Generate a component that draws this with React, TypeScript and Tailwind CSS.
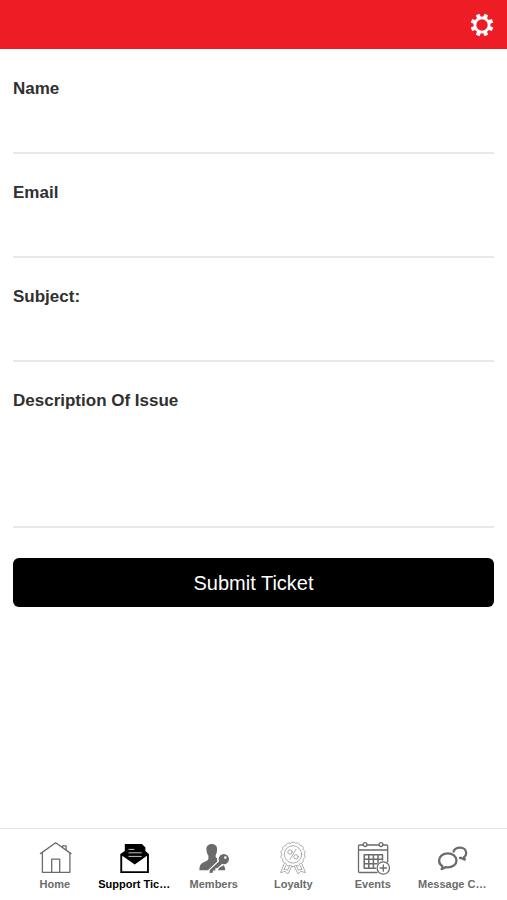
import type { ReactNode } from "react";
import clsx from "clsx";

const toothAngles = [22.5, 67.5, 112.5, 157.5, 202.5, 247.5, 292.5, 337.5];

const GearIcon = () => (
  <svg viewBox="-12 -12 24 24" className="size-6" aria-hidden="true">
    <circle r="7.1" fill="none" stroke="currentColor" strokeWidth="2.8" />
    {toothAngles.map((a) => (
      <path key={a} d="M-2.1 -7.6 L-1.9 -11.4 H1.9 L2.1 -7.6 Z" fill="currentColor" transform={`rotate(${a})`} />
    ))}
  </svg>
);

const NavIcon = ({ children }: { children: ReactNode }) => (
  <svg
    viewBox="0 0 36 36" className="size-9" aria-hidden="true"
    fill="none" stroke="currentColor" strokeWidth="1.3" strokeLinejoin="round" strokeLinecap="round"
  >
    {children}
  </svg>
);

const HomeIcon = () => (
  <NavIcon>
    <path d="M5.4 13V32.3H32.9V13" />
    <path d="M3.4 13.6 18.7 2.7 34 13.6" />
    <path d="M14.7 32V19.2h8V32" />
    <path d="M25.5 7.2V5.8h3.6v4" />
  </NavIcon>
);

const TicketIcon = () => (
  <NavIcon>
    <path d="M8.8 4H26l3.4 3.4V11l3.5 3v19H4.3V14l4.5-3Z" fill="currentColor" stroke="none" />
    <path d="M6.2 15.8V31.2H31V15.8L18.7 24.6Z" fill="#fff" stroke="none" />
    <path d="M12.9 9.4h5M12.9 12.8h12.4M12.9 16.4h12.4" stroke="#c4c4c4" strokeWidth="1" />
  </NavIcon>
);

const MembersIcon = () => (
  <NavIcon>
    <path
      d="M15.8 4c-3.7 0-5.6 2.4-5.4 5.5.1 2.6 1 4.800 2 6.200v3.100c-.5 1.700-2.300 2.600-4.600 3.500-3.200 1.200-4.400 3.600-4.400 7.900h8.800l9.400-8.900v-2.900c-1.200-.5-2.100-1.300-2.100-2.700.9-1.400 1.500-3.700 1.600-6.200.2-3.200-1.800-5.500-5.300-5.500Z"
      fill="currentColor" stroke="none"
    />
    <path d="M25 22.400 14.600 32" stroke="#fff" strokeWidth="6" strokeLinecap="butt" />
    <circle cx="27.600" cy="19.300" r="6.500" fill="#fff" stroke="none" />
    <circle cx="27.800" cy="19.100" r="5.200" fill="currentColor" stroke="none" />
    <circle cx="29.300" cy="17.600" r="1.300" fill="#fff" stroke="none" />
    <path d="m25 19.500-11.200 10.500-.4 2.900 3.300-.2.300-2.100 2.200-.1.200-2.200 2.100-.2 6.200-5.500Z" fill="currentColor" stroke="none" />
    <path d="m21.900 30.300 1.300-2.500 4.400-2.500c1.200 1.100 1.500 2.900 1.500 5Z" fill="currentColor" stroke="none" />
  </NavIcon>
);

// Scalloped outline of the rosette
const lobes = 14;
const polar = (r: number, step: number) => {
  const a = (step * 2 * Math.PI) / lobes;
  return `${(18 + r * Math.sin(a)).toFixed(2)} ${(14.4 - r * Math.cos(a)).toFixed(2)}`;
};
const rosette = `M${polar(11.3, -0.5)}${Array.from({ length: lobes }, (_, i) => `Q${polar(14, i)} ${polar(11.3, i + 0.5)}`).join("")}Z`;

const LoyaltyIcon = () => (
  <NavIcon>
    <g strokeWidth="0.9">
      <path d={rosette} />
      <circle cx="18" cy="14.4" r="8.7" />
      <path d="M9 24 5.600 32.600l4.500-1.200 2.900 2.400 3.800-7.600M27 24l3.400 8.600-4.500-1.200-2.900 2.400-3.800-7.600" />
      <path d="m10.800 25.500-1.900 4.300 2.100-.6 1.400 1.300 2-4.300M25.200 25.500l1.900 4.300-2.100-.6-1.400 1.300-2-4.300" />
      <path d="m20.900 9.500-5.800 9.800" />
      <circle cx="15" cy="12" r="2.200" />
      <circle cx="21" cy="16.800" r="2.200" />
    </g>
  </NavIcon>
);

const EventsIcon = () => (
  <NavIcon>
    <path d="M8 5H4.600Q3.500 5 3.500 6.200V31.300q0 1.200 1.200 1.200H22M12.100 5h11.800M28 5h3.500Q32.700 5 32.700 6.200V22M3.500 10H32.700" />
    <circle cx="10.100" cy="4.600" r="1.900" />
    <circle cx="26" cy="4.600" r="1.900" />
    <path
      d="M9.200 14.700H27.500V20M9.200 14.700V28.300H20.500M13.800 14.700V28.300M18.400 14.700V28.300M23 14.700V22.500M9.200 19.200H27.500M9.200 23.800H22"
      strokeWidth="1.500"
    />
    <circle cx="28.300" cy="28" r="6.200" />
    <path d="M28.300 24.800v6.400M25.100 28h6.400" />
  </NavIcon>
);

const MessageIcon = () => (
  <NavIcon>
    <g strokeWidth="2.300">
      <path d="M8.500 26.200C6.300 25 5.100 22.900 5.100 20.400c0-4.100 3.900-7.100 8.700-7.100s8.700 3 8.700 7.100-3.900 7-8.700 7c-.8 0-1.500 0-2.200-.2-1.200.9-2.600 1.600-4 1.900.6-.8.9-1.900.9-2.900Z" />
      <path d="M19.600 11.500c.9-2.400 3.400-3.900 6.300-3.900 3.700 0 6.300 2.400 6.300 5.400 0 1.800-.8 3.300-2.200 4.300.1.900.4 1.500.8 2.200-1.300-.2-2.400-.7-3.300-1.500h-1.600" />
    </g>
  </NavIcon>
);

const fields = [
  { id: "name", label: "Name", type: "text" },
  { id: "email", label: "Email", type: "email" },
  { id: "subject", label: "Subject:", type: "text" },
];

const tabs = [
  { icon: HomeIcon, label: "Home" },
  { icon: TicketIcon, label: "Support Tic…", active: true },
  { icon: MembersIcon, label: "Members" },
  { icon: LoyaltyIcon, label: "Loyalty", faint: true },
  { icon: EventsIcon, label: "Events" },
  { icon: MessageIcon, label: "Message C…" },
];

const labelClass = "text-[17px] leading-6 font-bold text-[#303030]";
const inputClass = "w-full resize-none border-b-2 border-[#e8e8e8] bg-transparent text-[17px] outline-none";

const App = () => (
  <div className="flex min-h-screen flex-col bg-white font-['Liberation_Sans',Arial,sans-serif]">
    <header className="flex h-[49px] items-center justify-end bg-[#ee1c25] px-[13px] text-white">
      <button type="button" aria-label="Settings">
        <GearIcon />
      </button>
    </header>

    <form className="flex flex-1 flex-col px-[13px] pt-7" onSubmit={(e) => e.preventDefault()}>
      {fields.map((f) => (
        <div key={f.id} className="mb-[27px] flex flex-col">
          <label htmlFor={f.id} className={labelClass}>{f.label}</label>
          <input id={f.id} type={f.type} className={clsx(inputClass, "h-[53px]")} />
        </div>
      ))}
      <div className="mb-[30px] flex flex-col">
        <label htmlFor="description" className={labelClass}>Description Of Issue</label>
        <textarea id="description" className={clsx(inputClass, "h-[115px]")} />
      </div>
      <button type="submit" className="h-[49px] w-full rounded-md bg-black text-xl text-white">
        Submit Ticket
      </button>
    </form>

    <nav className="grid grid-cols-6 border-t border-[#e4e4e4] px-[15px] pt-[11px] pb-2">
      {tabs.map((tab) => {
        const Icon = tab.icon;
        return (
          <a
            key={tab.label} href="#"
            className={clsx("flex flex-col items-center", tab.active ? "text-black" : "text-[#6b6b6b]")}
          >
            <span className={clsx(tab.faint && "text-[#a3a3a3]")}>
              <Icon />
            </span>
            <span className="text-[11px] leading-4 font-bold whitespace-nowrap">{tab.label}</span>
          </a>
        );
      })}
    </nav>
  </div>
);

export default App;
